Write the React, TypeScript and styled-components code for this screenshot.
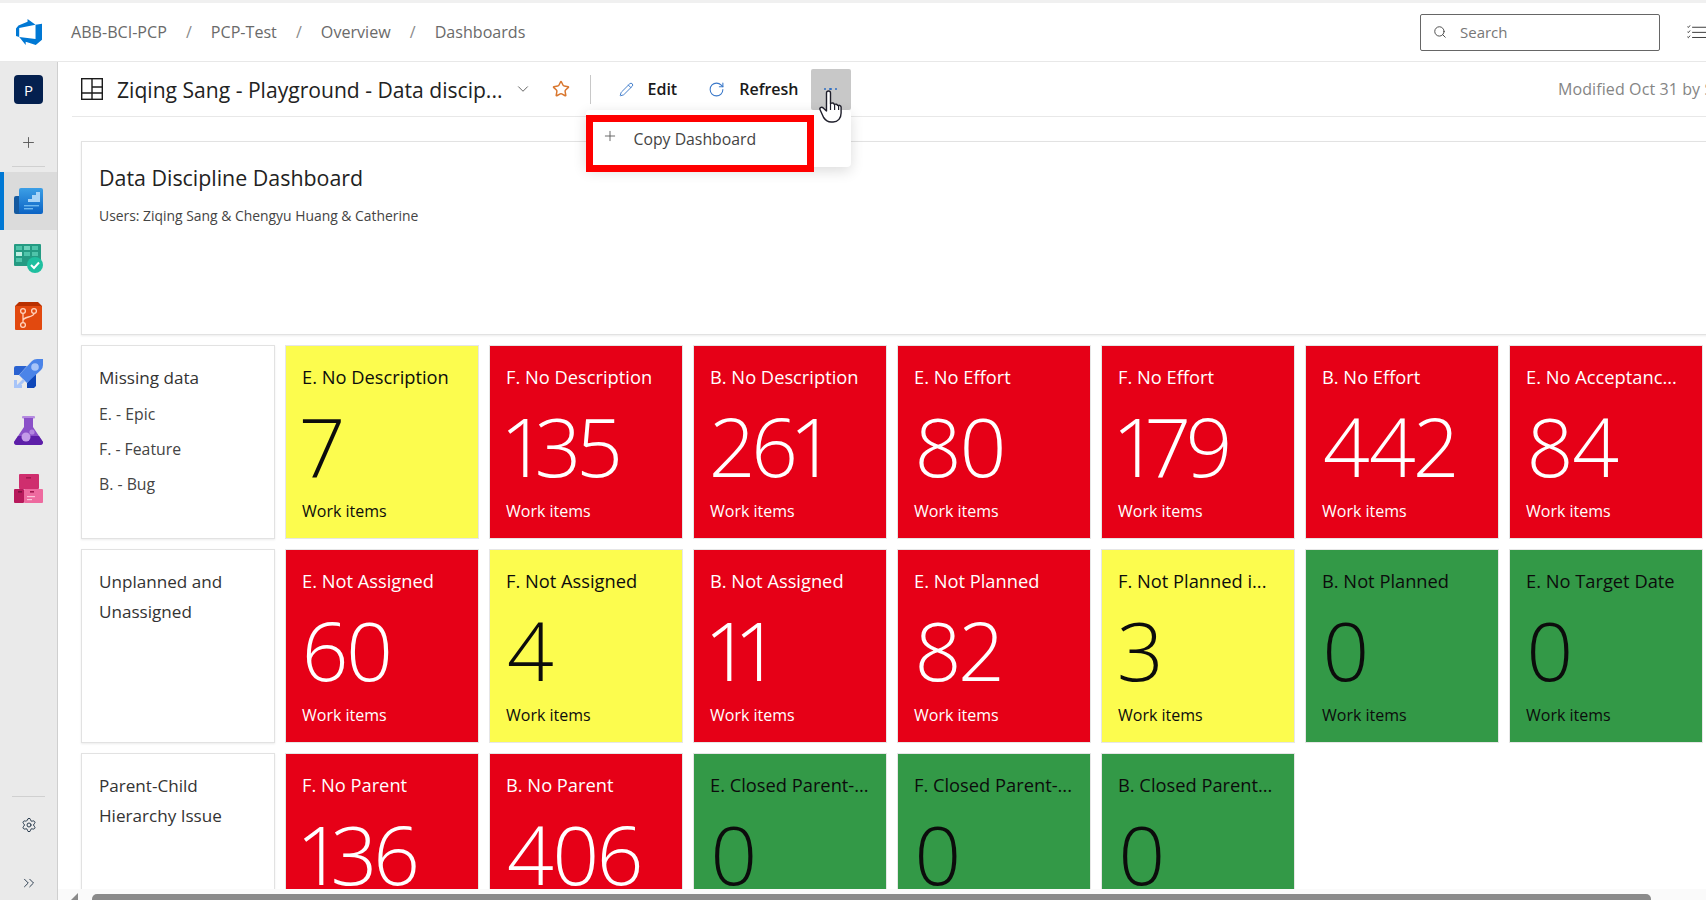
import React from 'react';
import styled, { createGlobalStyle } from 'styled-components';
import { ChevronDown, ChevronsRight, Pencil, Plus, RotateCw, Search, Settings, Star } from 'lucide-react';

const GlobalStyle = createGlobalStyle`
    html, body {
        margin: 0;
        padding: 0;
        height: 100%;
        overflow: hidden;
        background: #ffffff;
        font-family: "Open Sans", "Noto Sans", sans-serif;
    }
    * { box-sizing: border-box; }
`

type TileColor = 'red' | 'yellow' | 'green'

interface TileData {
    title: string,
    value: number,
    color: TileColor,
}

const rowOne: TileData[] = [
    { title: 'E. No Description', value: 7, color: 'yellow' },
    { title: 'F. No Description', value: 135, color: 'red' },
    { title: 'B. No Description', value: 261, color: 'red' },
    { title: 'E. No Effort', value: 80, color: 'red' },
    { title: 'F. No Effort', value: 179, color: 'red' },
    { title: 'B. No Effort', value: 442, color: 'red' },
    { title: 'E. No Acceptanc...', value: 84, color: 'red' },
]

const rowTwo: TileData[] = [
    { title: 'E. Not Assigned', value: 60, color: 'red' },
    { title: 'F. Not Assigned', value: 4, color: 'yellow' },
    { title: 'B. Not Assigned', value: 11, color: 'red' },
    { title: 'E. Not Planned', value: 82, color: 'red' },
    { title: 'F. Not Planned i...', value: 3, color: 'yellow' },
    { title: 'B. Not Planned', value: 0, color: 'green' },
    { title: 'E. No Target Date', value: 0, color: 'green' },
]

const rowThree: TileData[] = [
    { title: 'F. No Parent', value: 136, color: 'red' },
    { title: 'B. No Parent', value: 406, color: 'red' },
    { title: 'E. Closed Parent-...', value: 0, color: 'green' },
    { title: 'F. Closed Parent-...', value: 0, color: 'green' },
    { title: 'B. Closed Parent...', value: 0, color: 'green' },
]

const tileBackground = { red: '#e60017', yellow: '#fcfc4e', green: '#339947' }

const Logo = () => (
    <svg width="26" height="26" viewBox="0 0 24 24">
        <path fill="#0078d4" d="M0 8.877L2.247 5.91l8.405-3.416V.022l7.37 5.393L2.966 8.338v8.225L0 15.707zm24-4.45v14.651l-5.753 4.9-9.303-3.057v3.056l-5.978-7.416 15.057 1.798V5.415z" />
    </svg>
)

const ChecklistIcon = () => (
    <svg width="26" height="20" viewBox="0 0 26 20">
        <g fill="none" stroke="#222222" strokeWidth="1.2">
            <path d="M0.500 2.500l1.300 1.300 2.400-2.800M0.500 9.500l1.300 1.300 2.400-2.800M0.500 16.500l1.300 1.300 2.400-2.800" />
            <path d="M7 3.500h19M7 10.500h19M7 17.500h19" />
        </g>
    </svg>
)

const OverviewIcon = () => (
    <svg width="29" height="26" viewBox="0 0 29 26">
        <defs>
            <linearGradient id="ov" x1="0" y1="0" x2="0" y2="1">
                <stop offset="0" stopColor="#3c9fe6" />
                <stop offset="1" stopColor="#0b63c4" />
            </linearGradient>
        </defs>
        <rect x="0" y="8" width="10" height="18" rx="2" fill="#14599f" />
        <rect x="5" y="0" width="24" height="26" rx="2" fill="url(#ov)" />
        <path d="M10 14h4v-3h4v-4h4v-3h4v10z" fill="#a8d4f7" />
        <rect x="10" y="17" width="15" height="1.4" fill="#6db8ef" />
        <rect x="10" y="20" width="9" height="1.4" fill="#6db8ef" />
    </svg>
)

const BoardsIcon = () => (
    <svg width="29" height="29" viewBox="0 0 29 29">
        <rect x="0" y="0" width="27" height="22" rx="1" fill="#259b83" />
        <rect x="2" y="2" width="6" height="4" fill="#4fc4aa" />
        <rect x="10" y="2" width="6" height="4" fill="#6fd2bb" />
        <rect x="18" y="2" width="6" height="4" fill="#4fc4aa" />
        <rect x="2" y="8" width="6" height="4" fill="#bff0e3" />
        <rect x="10" y="8" width="6" height="4" fill="#4fc4aa" />
        <rect x="18" y="8" width="6" height="4" fill="#4fc4aa" />
        <rect x="2" y="14" width="6" height="4" fill="#4fc4aa" />
        <circle cx="21" cy="21" r="8" fill="#1fbf9f" />
        <path d="M17 21l3 3 5-5.500" fill="none" stroke="#ffffff" strokeWidth="2" />
    </svg>
)

const ReposIcon = () => (
    <svg width="27" height="28" viewBox="0 0 27 28">
        <path d="M4 0h19l4 4v2H0V4z" fill="#b93000" />
        <rect x="0" y="4" width="27" height="24" rx="1" fill="#e2490f" />
        <g fill="none" stroke="#ffd3bd" strokeWidth="1.3">
            <circle cx="8" cy="9" r="2.400" />
            <circle cx="19" cy="9" r="2.400" />
            <circle cx="8" cy="23" r="2.400" />
            <path d="M8 11.500v9M19 11.500c0 4-11 3-11 7" />
        </g>
    </svg>
)

const PipelinesIcon = () => (
    <svg width="29" height="29" viewBox="0 0 29 29">
        <path d="M0 9q0-2 2-2h11l-8 9H0z" fill="#2a62d0" />
        <path d="M13 24l9-11v14l-2 2h-7z" fill="#0f47b8" />
        <path d="M5 16L18 2q2-2 5-2h6v6q0 3-2 5L13 24z" fill="#4b84e8" />
        <circle cx="21" cy="8" r="3.800" fill="#a7c4f8" />
        <path d="M0 29v-8h3v5h5v3zM3 26l6-6 2 2-6 6z" fill="#a7c4f8" />
    </svg>
)

const TestPlansIcon = () => (
    <svg width="29" height="29" viewBox="0 0 29 29">
        <rect x="8" y="0" width="13" height="2.500" rx="1" fill="#b58ae0" />
        <path d="M10 2h9v9l10 15q0 3-3 3H3q-3 0-3-3l10-15z" fill="#8a50c8" />
        <path d="M4 20h21l4 6q0 3-3 3H3q-3 0-3-3z" fill="#5d1fa8" />
        <circle cx="12" cy="21" r="4.500" fill="#c39ae8" />
        <circle cx="18" cy="16" r="2.600" fill="#b486e0" />
    </svg>
)

const ArtifactsIcon = () => (
    <svg width="29" height="29" viewBox="0 0 29 29">
        <rect x="5" y="0" width="20" height="15" rx="1" fill="#cf2e6e" />
        <rect x="0" y="15" width="10" height="14" rx="1" fill="#b81a5c" />
        <rect x="10" y="15" width="19" height="14" rx="1" fill="#ee6a9f" />
        <rect x="12" y="3" width="5" height="1.600" fill="#a31850" />
        <rect x="4" y="17" width="4" height="1.600" fill="#7f1040" />
        <rect x="16" y="17" width="4" height="1.600" fill="#a31850" />
        <rect x="13" y="22" width="8" height="1.200" fill="#fbc1d8" />
        <rect x="13" y="25" width="5" height="1.200" fill="#fbc1d8" />
    </svg>
)

const DashboardGlyph = () => (
    <svg width="22" height="22" viewBox="0 0 22 22">
        <g fill="none" stroke="#1b1b1b" strokeWidth="1.4">
            <rect x="0.700" y="0.700" width="20.600" height="20.600" />
            <path d="M11 0.700v20.600M11 9h10.300M0.700 15h20.600" />
        </g>
    </svg>
)

const HandCursor = () => (
    <svg width="26" height="33" viewBox="0 0 26 33">
        <path
            d="M7.500 3a2 2 0 0 1 4 0v10.500l.6-.2a2 2 0 0 1 3 .9l.5.3a2 2 0 0 1 3 .9l.5.2a2 2 0 0 1 3 1.500V23c0 5-3 9-8 9h-2c-3.500 0-5.500-1.500-7.500-4.500L1.200 20c-1.200-2 1.200-3.600 3-2.100l3.300 3z"
            fill="#ffffff"
            stroke="#1f1f2b"
            strokeWidth="1.4"
            strokeLinejoin="round"
        />
        <path d="M11.500 13.500V20M15.600 14.500V20M19.600 15.700V20" stroke="#1f1f2b" strokeWidth="1.200" fill="none" />
    </svg>
)

const Tile: React.FC<{ data: TileData }> = ({ data }) => (
    <TileBox $color={data.color}>
        <TileTitle>{data.title}</TileTitle>
        <TileValue>{data.value}</TileValue>
        <TileFooter>Work items</TileFooter>
    </TileBox>
)

export default function App() {
    return (
        <>
            <GlobalStyle />
            <Page>
                <TopStrip />
                <Header>
                    <Logo />
                    <Breadcrumb>
                        <Crumb>ABB-BCI-PCP</Crumb>
                        <CrumbSep>/</CrumbSep>
                        <Crumb>PCP-Test</Crumb>
                        <CrumbSep>/</CrumbSep>
                        <Crumb>Overview</Crumb>
                        <CrumbSep>/</CrumbSep>
                        <Crumb>Dashboards</Crumb>
                    </Breadcrumb>
                    <SearchBox>
                        <Search size={14} color="#444" strokeWidth={1.6} />
                        <SearchText>Search</SearchText>
                    </SearchBox>
                    <ChecklistSlot>
                        <ChecklistIcon />
                    </ChecklistSlot>
                </Header>
                <Body>
                    <Sidebar>
                        <Avatar>P</Avatar>
                        <AddProject><Plus size={17} color="#555" strokeWidth={1.3} /></AddProject>
                        <SideDivider />
                        <NavItem $active><OverviewIcon /></NavItem>
                        <NavItem><BoardsIcon /></NavItem>
                        <NavItem><ReposIcon /></NavItem>
                        <NavItem><PipelinesIcon /></NavItem>
                        <NavItem><TestPlansIcon /></NavItem>
                        <NavItem><ArtifactsIcon /></NavItem>
                        <SideBottom>
                            <SideDivider />
                            <BottomButton $height={46}><Settings size={16} color="#2c3e50" strokeWidth={1.5} /></BottomButton>
                            <BottomButton $height={34}><ChevronsRight size={18} color="#2c3e50" strokeWidth={1.3} /></BottomButton>
                        </SideBottom>
                    </Sidebar>
                    <Main>
                        <TitleBar>
                            <DashboardGlyph />
                            <DashboardName>Ziqing Sang - Playground - Data discip...</DashboardName>
                            <TitleChevron><ChevronDown size={18} color="#555" strokeWidth={1.2} /></TitleChevron>
                            <StarSlot><Star size={18} color="#d9772f" strokeWidth={2} /></StarSlot>
                            <BarDivider />
                            <ActionButton>
                                <Pencil size={15} color="#3a78c9" strokeWidth={1.5} />
                                <ActionLabel>Edit</ActionLabel>
                            </ActionButton>
                            <ActionButton>
                                <RotateCw size={17} color="#3a78c9" strokeWidth={1.5} />
                                <ActionLabel>Refresh</ActionLabel>
                            </ActionButton>
                            <MoreWrap>
                                <MoreButton>
                                    <Dot /><Dot /><Dot />
                                </MoreButton>
                                <CursorSpot><HandCursor /></CursorSpot>
                                <Menu>
                                    <MenuItem>
                                        <Plus size={16} color="#555" strokeWidth={1.3} />
                                        <MenuLabel>Copy Dashboard</MenuLabel>
                                    </MenuItem>
                                    <Highlight />
                                </Menu>
                            </MoreWrap>
                            <Modified>Modified Oct 31 by Sang</Modified>
                        </TitleBar>
                        <Canvas>
                            <Hero>
                                <HeroTitle>Data Discipline Dashboard</HeroTitle>
                                <HeroText>Users: Ziqing Sang &amp; Chengyu Huang &amp; Catherine</HeroText>
                            </Hero>
                            <TileRow>
                                <NoteCard>
                                    <NoteTitle>Missing data</NoteTitle>
                                    <NoteList>
                                        <NoteLine>E. - Epic</NoteLine>
                                        <NoteLine>F. - Feature</NoteLine>
                                        <NoteLine>B. - Bug</NoteLine>
                                    </NoteList>
                                </NoteCard>
                                {rowOne.map(item => <Tile key={item.title} data={item} />)}
                            </TileRow>
                            <TileRow>
                                <NoteCard>
                                    <NoteTitle>Unplanned and</NoteTitle>
                                    <NoteTitle>Unassigned</NoteTitle>
                                </NoteCard>
                                {rowTwo.map(item => <Tile key={item.title} data={item} />)}
                            </TileRow>
                            <TileRow>
                                <NoteCard>
                                    <NoteTitle>Parent-Child</NoteTitle>
                                    <NoteTitle>Hierarchy Issue</NoteTitle>
                                </NoteCard>
                                {rowThree.map(item => <Tile key={item.title} data={item} />)}
                            </TileRow>
                        </Canvas>
                        <ScrollBar>
                            <ScrollArrow />
                            <ScrollThumb />
                        </ScrollBar>
                    </Main>
                </Body>
            </Page>
        </>
    )
}

const Page = styled.div`
    width: 100vw;
    height: 100vh;
    display: flex;
    flex-direction: column;
    overflow: hidden;
    background: #ffffff;
`

const TopStrip = styled.div`
    height: 3px;
    flex: none;
    background: #f0f0f0;
`

const Header = styled.header`
    height: 59px;
    flex: none;
    display: flex;
    align-items: center;
    padding-left: 16px;
    border-bottom: 1px solid #e8e8e8;
    border-top-left-radius: 6px;
    background: #ffffff;
    overflow: hidden;
`

const Breadcrumb = styled.nav`
    display: flex;
    align-items: center;
    margin-left: 29px;
`

const Crumb = styled.span`
    font-size: 16.1px;
    color: #6a6a6a;
    white-space: nowrap;
`

const CrumbSep = styled.span`
    width: 44px;
    text-align: center;
    font-size: 16px;
    color: #8a8a8a;
`

const SearchBox = styled.div`
    margin-left: auto;
    width: 240px;
    height: 37px;
    display: flex;
    align-items: center;
    gap: 13px;
    padding-left: 12px;
    border: 1px solid #666666;
    border-radius: 2px;
`

const SearchText = styled.span`
    font-size: 15px;
    color: #777777;
`

const ChecklistSlot = styled.div`
    width: 46px;
    flex: none;
    display: flex;
    padding-left: 27px;
`

const Body = styled.div`
    flex: 1;
    min-height: 0;
    display: flex;
`

const Sidebar = styled.aside`
    width: 58px;
    flex: none;
    display: flex;
    flex-direction: column;
    align-items: stretch;
    background: #eaeaea;
    border-right: 1px solid #cfcfcf;
    padding-top: 13px;
`

const Avatar = styled.div`
    width: 29px;
    height: 29px;
    margin-left: 14px;
    display: flex;
    align-items: center;
    justify-content: center;
    border-radius: 4px;
    background: #04204f;
    color: #ffffff;
    font-size: 15px;
`

const AddProject = styled.div`
    height: 36px;
    margin-top: 20px;
    display: flex;
    align-items: center;
    justify-content: center;
`

const SideDivider = styled.div`
    height: 1px;
    flex: none;
    margin: 6px 12px 5px;
    background: #d0d0d0;
`

const NavItem = styled.div<{ $active?: boolean }>`
    height: 57.5px;
    flex: none;
    display: flex;
    align-items: center;
    justify-content: center;
    padding-right: 5px;
    background: ${props => props.$active ? '#dbdbdb' : 'transparent'};
    border-left: 4px solid ${props => props.$active ? '#0078d4' : 'transparent'};
`

const SideBottom = styled.div`
    margin-top: auto;
    display: flex;
    flex-direction: column;
    gap: 18px;
    & > :first-child {
        margin-bottom: -13px;
    }
`

const BottomButton = styled.div<{ $height: number }>`
    height: ${props => props.$height}px;
    display: flex;
    align-items: center;
    justify-content: center;
`

const Main = styled.main`
    flex: 1;
    min-width: 0;
    display: flex;
    flex-direction: column;
`

const TitleBar = styled.div`
    height: 55px;
    flex: none;
    display: flex;
    align-items: center;
    margin-left: 14px;
    padding-left: 9px;
    border-bottom: 1px solid #e8e8e8;
`

const DashboardName = styled.h1`
    margin: 0 0 0 14px;
    font-size: 21.1px;
    font-weight: 400;
    color: #222222;
    white-space: nowrap;
`

const TitleChevron = styled.div`
    margin-left: 11px;
    display: flex;
`

const StarSlot = styled.div`
    margin-left: 20px;
    display: flex;
`

const BarDivider = styled.div`
    width: 1px;
    height: 29px;
    margin: 0 28px 0 20px;
    background: #c8c8c8;
`

const ActionButton = styled.div`
    display: flex;
    align-items: center;
    gap: 14px;
    margin-right: 31px;
`

const ActionLabel = styled.span`
    font-size: 16px;
    font-weight: 600;
    color: #1a1a1a;
`

const MoreWrap = styled.div`
    position: relative;
    margin-left: -19px;
`

const MoreButton = styled.div`
    width: 40px;
    height: 41px;
    display: flex;
    align-items: center;
    justify-content: center;
    gap: 3px;
    border-radius: 2px;
    background: #c8c8c8;
`

const Dot = styled.span`
    width: 2.5px;
    height: 2.5px;
    border-radius: 50%;
    background: #2f6fc4;
`

const CursorSpot = styled.div`
    position: absolute;
    left: 8px;
    top: 21px;
    z-index: 5;
`

const Menu = styled.div`
    position: absolute;
    right: 0;
    top: 41px;
    width: 265px;
    height: 57px;
    background: #ffffff;
    border-radius: 4px;
    box-shadow: 0 4px 14px rgba(0, 0, 0, 0.14);
    z-index: 3;
`

const MenuItem = styled.div`
    display: flex;
    align-items: flex-start;
    gap: 16px;
    padding: 18px 0 0 16px;
`

const MenuLabel = styled.span`
    font-size: 15.8px;
    color: #444444;
`

const Highlight = styled.div`
    position: absolute;
    left: 0;
    top: 5px;
    width: 228px;
    height: 57px;
    border: 7px solid #ff0000;
`

const Modified = styled.div`
    margin-left: auto;
    width: 148px;
    flex: none;
    overflow: hidden;
    white-space: nowrap;
    font-size: 16px;
    letter-spacing: 0.1px;
    color: #858585;
`

const Canvas = styled.div`
    flex: 1;
    min-height: 0;
    overflow: hidden;
    padding: 24px 0 0 23px;
    display: flex;
    flex-direction: column;
    gap: 10px;
`

const Hero = styled.section`
    width: 1750px;
    height: 194px;
    flex: none;
    padding: 19px 17px;
    border: 1px solid #e2e2e2;
    box-shadow: 0 1px 2px rgba(0, 0, 0, 0.08);
`

const HeroTitle = styled.h2`
    margin: 0;
    font-size: 21.4px;
    font-weight: 400;
    color: #222222;
    line-height: 34px;
`

const HeroText = styled.p`
    margin: 11px 0 0;
    font-size: 13.9px;
    color: #444444;
    line-height: 20px;
`

const TileRow = styled.div`
    flex: none;
    display: grid;
    grid-template-columns: repeat(8, 194px);
    grid-auto-rows: 194px;
    column-gap: 10px;
`

const NoteCard = styled.div`
    padding: 17px 17px;
    border: 1px solid #e2e2e2;
    box-shadow: 0 1px 2px rgba(0, 0, 0, 0.08);
    background: #ffffff;
`

const NoteTitle = styled.div`
    font-size: 17.1px;
    line-height: 30px;
    color: #333333;
`

const NoteList = styled.div`
    margin-top: 4px;
`

const NoteLine = styled.div`
    font-size: 15.8px;
    line-height: 35px;
    color: #444444;
`

const TileBox = styled.div<{ $color: TileColor }>`
    display: flex;
    flex-direction: column;
    padding: 17px 17px 0;
    background: ${props => tileBackground[props.$color]};
    color: ${props => props.$color === 'red' ? '#ffffff' : '#0c0c0c'};
    box-shadow: inset 0 0 0 1px #e6e6e6;
`

const TileTitle = styled.div`
    font-size: 18.3px;
    line-height: 30px;
    white-space: nowrap;
`

const TileValue = styled.div`
    margin: 1px 0 2px;
    font-size: 82px;
    font-weight: 300;
    line-height: 104px;
    letter-spacing: -2.5px;
    font-variant-numeric: proportional-nums;
`

const TileFooter = styled.div`
    font-size: 16px;
    line-height: 24px;
`

const ScrollBar = styled.div`
    height: 11px;
    flex: none;
    display: flex;
    align-items: flex-end;
    padding-left: 13px;
    background: #fafafa;
`

const ScrollArrow = styled.div`
    width: 0;
    height: 0;
    border-style: solid;
    border-width: 0 0 7px 7px;
    border-color: transparent transparent #8a8a8a transparent;
`

const ScrollThumb = styled.div`
    width: 1559px;
    height: 6px;
    margin-left: 14px;
    border-radius: 5px 5px 0 0;
    background: #8a8a8a;
`
